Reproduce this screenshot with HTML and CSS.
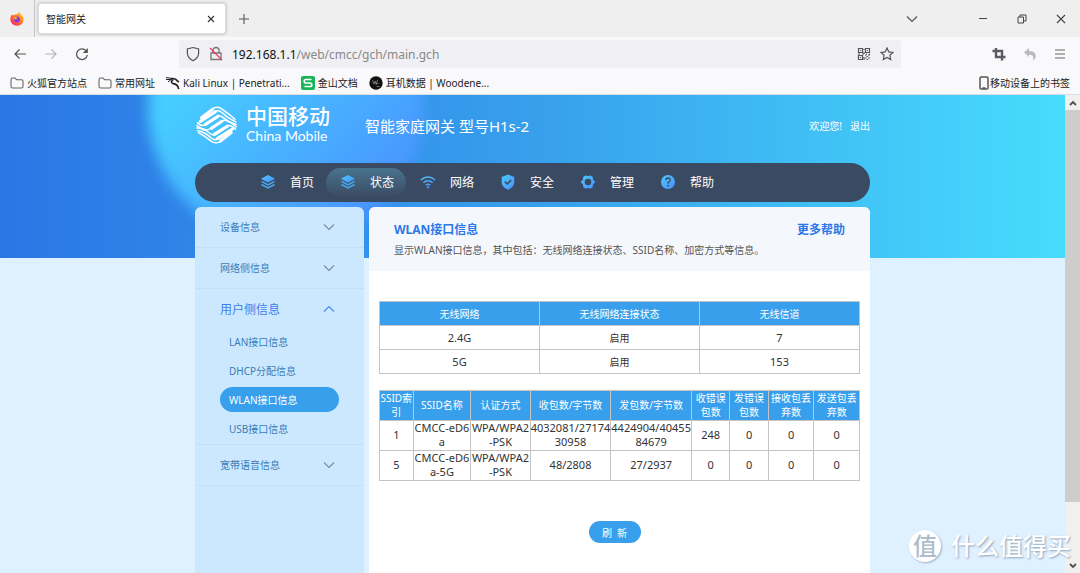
FILE: index.html
```html
<!DOCTYPE html>
<html lang="zh-CN">
<head>
<meta charset="utf-8">
<title>智能网关</title>
<link rel="stylesheet" href="styles.css">
</head>
<body>
<svg class="defs" aria-hidden="true">
  <defs>
    <linearGradient id="blue" x1="0" y1="0" x2="1" y2="1"><stop offset="0" stop-color="#4cc9fb"/><stop offset="1" stop-color="#4790ff"/></linearGradient>
    <linearGradient id="fox" x1="1" y1="0" x2="0" y2="1"><stop offset="0" stop-color="#ffe226"/><stop offset=".45" stop-color="#ff7a2a"/><stop offset="1" stop-color="#f5156c"/></linearGradient>
    <symbol id="layers" viewBox="0 0 16 16">
      <path d="M8 1 15 4.700 8 8.400 1 4.700z" fill="url(#blue)"/>
      <path d="M1.500 7.400 8 10.800l6.500-3.400M1.500 10.500 8 13.900l6.500-3.400" fill="none" stroke="#46a9ee" stroke-width="1.500"/>
    </symbol>
    <symbol id="down" viewBox="0 0 12 8"><path d="M1 1.500l5 5 5-5" fill="none" stroke="currentColor" stroke-width="1.200"/></symbol>
    <symbol id="folder" viewBox="0 0 14 14"><path d="M1 3.500Q1 2 2.500 2H5l1.500 1.700h5Q13 3.700 13 5v5.500Q13 12 11.500 12h-9Q1 12 1 10.500z" fill="none" stroke="#666" stroke-width="1.100"/></symbol>
  </defs>
</svg>

<header class="browser">
  <div class="tabbar">
    <div class="pinned">
      <svg width="16" height="16" viewBox="0 0 16 16"><path d="M10 1q1 1.500 2 2.500 3 2.500 2.500 6A6.600 6.300 0 0 1 1.400 9Q1 6 2.500 3.500l1 1Q5 3.500 6.500 3.500 9 3.500 10 1z" fill="url(#fox)"/><circle cx="8" cy="8.600" r="3" fill="#8a3be0"/><path d="M4 6q3-1 4 .8 1 1.500-2.500 1.700z" fill="#ff9a2b"/></svg>
    </div>
    <div class="tab">
      <span>智能网关</span>
      <button class="icon-btn" aria-label="关闭标签页"><svg width="8" height="8" viewBox="0 0 8 8"><path d="M1 1l6 6M7 1L1 7" stroke="#333" stroke-width="1.100"/></svg></button>
    </div>
    <button class="icon-btn newtab" aria-label="新标签页"><svg width="12" height="12" viewBox="0 0 12 12"><path d="M6 1v10M1 6h10" stroke="#555" stroke-width="1.100"/></svg></button>
    <div class="window-tools">
      <button class="icon-btn tabs-list" aria-label="所有标签页"><svg width="12" height="8"><use href="#down"/></svg></button>
      <button class="icon-btn" aria-label="最小化"><svg width="12" height="12" viewBox="0 0 12 12"><path d="M2 5.500h8" stroke="#444"/></svg></button>
      <button class="icon-btn" aria-label="还原"><svg width="12" height="12" viewBox="0 0 12 12"><path d="M2 4h5.500v6H2zM4 4V2h6v6H7.500" fill="none" stroke="#444"/></svg></button>
      <button class="icon-btn" aria-label="关闭"><svg width="12" height="12" viewBox="0 0 12 12"><path d="M2 2l8 8M10 2l-8 8" stroke="#444" stroke-width="1.100"/></svg></button>
    </div>
  </div>

  <div class="navbar">
    <div class="nav-buttons">
      <button class="icon-btn" aria-label="后退"><svg width="14" height="14" viewBox="0 0 14 14"><path d="M13 7H2M6.500 2.500 2 7l4.500 4.500" fill="none" stroke="#555" stroke-width="1.200"/></svg></button>
      <button class="icon-btn faded" aria-label="前进"><svg width="14" height="14" viewBox="0 0 14 14"><path d="M1 7h11M7.500 2.500 12 7l-4.500 4.500" fill="none" stroke="#555" stroke-width="1.200"/></svg></button>
      <button class="icon-btn" aria-label="刷新页面"><svg width="14" height="14" viewBox="0 0 14 14"><path d="M12.300 8A5.400 5.400 0 1 1 11 3.600" fill="none" stroke="#555" stroke-width="1.300"/><path d="M12.800 1v5H7.800z" fill="#555"/></svg></button>
    </div>
    <div class="urlbar">
      <svg width="14" height="16" viewBox="0 0 14 16"><path d="M7 1.500 12.600 3v4.500Q12.300 12 7 14.700 1.700 12 1.400 7.500V3z" fill="none" stroke="#555" stroke-width="1.200"/></svg>
      <svg width="14" height="16" viewBox="0 0 14 16"><path d="M4 7V4.500a3 3 0 0 1 6 0V7M2 7h10v6.500H2z" fill="none" stroke="#777" stroke-width="1.300"/><path d="M1 2l12 12" stroke="#f0385c" stroke-width="1.300"/></svg>
      <span class="url"><b>192.168.1.1</b>/web/cmcc/gch/main.gch</span>
      <svg width="14" height="14" viewBox="0 0 14 14" fill="none" stroke="#555" stroke-width="1.200"><path d="M1.500 1.500h4v4h-4zM8.500 1.500h4v4h-4zM1.500 8.500h4v4h-4z"/><path d="M3 3.500h1M10 3.500h1M3 10.500h1M8 8h1.500M11 8h2M9.500 9.500H11M8 11h1.500M11 11h2M9.500 12.500H11M7 2v1M7 5v2M1 7h2M5 7h2M9 7h1M12 7h1M7 10v3"/></svg>
      <svg width="14" height="14" viewBox="0 0 14 14"><path d="M7 1l1.800 3.900 4.200.5-3.100 2.900.8 4.200L7 10.400l-3.700 2.100.8-4.200L1 5.400l4.200-.5z" fill="none" stroke="#555" stroke-width="1.200"/></svg>
    </div>
    <div class="nav-tools">
      <button class="icon-btn" aria-label="截图"><svg width="14" height="14" viewBox="0 0 14 14"><path d="M4 1v9h9.500M.5 4H10v9.500" fill="none" stroke="#5b5b66" stroke-width="2.400"/></svg></button>
      <button class="icon-btn" aria-label="撤销"><svg width="14" height="14" viewBox="0 0 14 14"><path d="M1 5.500 6 1v3q7 0 6.800 5.500Q12.500 12 10 13.500 11.500 7.500 6 7.500V10z" fill="#b9b9c0"/></svg></button>
      <button class="icon-btn" aria-label="菜单"><svg width="12" height="12" viewBox="0 0 12 12"><path d="M1 2h10M1 6h10M1 10h10" stroke="#666" stroke-width="1.200"/></svg></button>
    </div>
  </div>

  <nav class="bookmarks">
    <a href="#"><svg width="14" height="14"><use href="#folder"/></svg>火狐官方站点</a>
    <a href="#"><svg width="14" height="14"><use href="#folder"/></svg>常用网址</a>
    <a href="#"><svg width="14" height="14" viewBox="0 0 14 14"><path d="M0 1.500l5 .8M0 3.500l5.500 0M2 6l3-2.400" stroke="#222" fill="none"/><path d="M5 2.600q5-.4 6 2.200l2 1.200M7 3.600q-3 2.600 0 4 5 .4 5.700 5.600" fill="none" stroke="#222" stroke-width="1.600"/></svg><span>Kali Linux | Penetrati...</span></a>
    <a href="#"><svg width="14" height="14" viewBox="0 0 14 14"><rect width="14" height="14" rx="2" fill="#18b657"/><path d="M10.500 3.500H5a1.500 1.500 0 0 0 0 3.500h4a1.500 1.500 0 0 1 0 3.500H3.500" fill="none" stroke="#fff" stroke-width="1.700"/></svg>金山文档</a>
    <a href="#"><svg width="14" height="14" viewBox="0 0 14 14"><circle cx="7" cy="7" r="6.700" fill="#111"/><path d="M3.500 4l1.400 4 1.300-3 1 3.500L8.500 4M7.500 7.500h2M7.500 10.500h3" fill="none" stroke="#999" stroke-width=".7"/></svg><span>耳机数据 | Woodene...</span></a>
    <a href="#" class="mobile"><svg width="10" height="14" viewBox="0 0 10 14"><rect x="1" y="1" width="8" height="12" rx="1.200" fill="none" stroke="#555" stroke-width="1.500"/><path d="M3.500 12h3" stroke="#555" stroke-width="1.500"/></svg>移动设备上的书签</a>
  </nav>
</header>

<div class="viewport">
  <div class="page">
    <div class="hero"><div class="glow"></div></div>
    <div class="container">
      <header class="brand">
        <svg class="logo" width="44" height="42" viewBox="0 0 144 138" fill="none" stroke="#fff" stroke-linecap="round">
          <g stroke-width="5">
            <path d="M54 18Q70 5 86 15 L112 34 131 50"/>
            <path d="M62 26Q76 18 88 28 108 48 134 59"/>
            <path d="M8 62Q22 76 34 68L68 42Q80 34 92 44 112 62 135 67"/>
            <path d="M6 71Q30 92 48 82L92 54Q108 50 135 75"/>
            <path d="M133 83Q116 66 106 72L72 98Q60 106 48 96 28 78 6 79"/>
            <path d="M80 113Q64 122 52 111 32 92 8 87"/>
            <path d="M88 121Q70 133 54 123L28 104 11 94"/>
          </g>
          <g stroke-width="10">
            <path d="M21 45 57 18M17 57 66 26M34 67 76 40M54 80 88 57M106 73 64 99M123 82 74 113M119 94 84 121"/>
          </g>
        </svg>
        <div class="brand-name"><span class="cn">中国移动</span><span class="en">China Mobile</span></div>
        <h1>智能家庭网关 型号H1s-2</h1>
        <div class="user"><span>欢迎您!</span><a href="#">退出</a></div>
      </header>

      <nav class="menu">
        <a href="#"><svg width="16" height="16"><use href="#layers"/></svg>首页</a>
        <a href="#" class="active"><svg width="16" height="16"><use href="#layers"/></svg>状态</a>
        <a href="#"><svg width="16" height="16" viewBox="0 0 16 16"><path d="M.8 6q7.200-6 14.400 0M3.400 8.700q4.600-3.800 9.200 0M5.700 11.200q2.300-1.700 4.600 0" fill="none" stroke="url(#blue)" stroke-width="1.500"/><circle cx="8" cy="13.300" r="1.200" fill="#4790ff"/></svg>网络</a>
        <a href="#"><svg width="16" height="16" viewBox="0 0 16 16"><path d="M8 .5 14.300 3v6Q13.500 13.500 8 15.700 2.500 13.500 1.700 9V3z" fill="url(#blue)"/><path d="M4.800 7.700 7.200 10l4-4" fill="none" stroke="#3b4a63" stroke-width="1.600"/></svg>安全</a>
        <a href="#"><svg width="16" height="16" viewBox="0 0 16 16"><path d="M5 1.700q1.500-.8 2.300.4h1.400q.8-1.200 2.300-.4l1.500 1q.8.800.3 2.200l1 1.500q1.200.4 1.200 1.600t-1.200 1.600l-1 1.500q.5 1.400-.3 2.200l-1.500 1q-1.500.8-2.300-.4H7.300q-.8 1.200-2.300.4l-1.500-1q-.8-.8-.3-2.200l-1-1.500Q1 9.200 1 8t1.200-1.600l1-1.500q-.5-1.400.3-2.200z" fill="url(#blue)"/><circle cx="8" cy="8" r="3.300" fill="#3b4a63"/></svg>管理</a>
        <a href="#"><svg width="16" height="16" viewBox="0 0 16 16"><circle cx="8" cy="8" r="7" fill="url(#blue)"/><path d="M5.800 6.300q0-2.300 2.300-2.300t2.200 2Q10.200 7.200 8.100 8.400v1.300" fill="none" stroke="#3b4a63" stroke-width="1.300"/><circle cx="8.100" cy="11.700" r=".9" fill="#3b4a63"/></svg>帮助</a>
      </nav>

      <div class="columns">
        <aside class="sidebar">
          <section><button class="group">设备信息<svg width="12" height="8"><use href="#down"/></svg></button></section>
          <section><button class="group">网络侧信息<svg width="12" height="8"><use href="#down"/></svg></button></section>
          <section>
            <button class="group open">用户侧信息<svg width="12" height="8"><use href="#down"/></svg></button>
            <ul>
              <li><a href="#">LAN接口信息</a></li>
              <li><a href="#">DHCP分配信息</a></li>
              <li><a href="#" class="current">WLAN接口信息</a></li>
              <li><a href="#">USB接口信息</a></li>
            </ul>
          </section>
          <section><button class="group">宽带语音信息<svg width="12" height="8"><use href="#down"/></svg></button></section>
        </aside>

        <main class="panel">
          <div class="intro">
            <div class="intro-top"><h2>WLAN接口信息</h2><a href="#">更多帮助</a></div>
            <p>显示WLAN接口信息，其中包括：无线网络连接状态、SSID名称、加密方式等信息。</p>
          </div>
          <div class="tables">
            <table class="radio">
              <thead><tr><th>无线网络</th><th>无线网络连接状态</th><th>无线信道</th></tr></thead>
              <tbody>
                <tr><td>2.4G</td><td class="state">启用</td><td>7</td></tr>
                <tr><td>5G</td><td class="state">启用</td><td>153</td></tr>
              </tbody>
            </table>
            <table class="ssid">
              <colgroup><col class="c-index"><col class="c-name"><col class="c-auth"><col class="c-bytes"><col class="c-bytes"><col class="c-err"><col class="c-err"><col class="c-drop"><col class="c-drop"></colgroup>
              <thead><tr><th>SSID索引</th><th>SSID名称</th><th>认证方式</th><th>收包数/字节数</th><th>发包数/字节数</th><th>收错误包数</th><th>发错误包数</th><th>接收包丢弃数</th><th>发送包丢弃数</th></tr></thead>
              <tbody>
                <tr><td>1</td><td>CMCC-eD6a</td><td>WPA/WPA2-PSK</td><td>4032081/2717430958</td><td>4424904/4045584679</td><td>248</td><td>0</td><td>0</td><td>0</td></tr>
                <tr><td>5</td><td>CMCC-eD6a-5G</td><td>WPA/WPA2-PSK</td><td>48/2808</td><td>27/2937</td><td>0</td><td>0</td><td>0</td><td>0</td></tr>
              </tbody>
            </table>
          </div>
          <div class="actions"><button class="refresh">刷&nbsp; 新</button></div>
        </main>
      </div>
    </div>
  </div>
  <div class="scrollbar">
    <button class="icon-btn up" aria-label="向上滚动"><svg width="8" height="6" viewBox="0 0 8 6"><path d="M1 5l3-3 3 3" fill="none" stroke="#505050" stroke-width="1.800"/></svg></button>
    <div class="thumb"></div>
    <button class="icon-btn" aria-label="向下滚动"><svg width="8" height="6" viewBox="0 0 8 6"><path d="M1 1l3 3 3-3" fill="none" stroke="#505050" stroke-width="1.800"/></svg></button>
  </div>
  <div class="watermark"><span class="seal">值</span><span>什么值得买</span></div>
</div>
</body>
</html>
```
FILE: styles.css
```css
* { box-sizing: border-box; }

body {
  margin: 0;
  height: 100vh;
  display: flex;
  flex-direction: column;
  overflow: hidden;
  font-family: "Noto Sans", "Noto Sans CJK SC", sans-serif;
  font-size: 10px;
  color: #333;
}

a { color: inherit; text-decoration: none; }
button { font: inherit; color: inherit; border: 0; background: none; padding: 0; }
svg { display: block; flex: none; }
.defs { position: absolute; width: 0; height: 0; }

.icon-btn { display: flex; align-items: center; justify-content: center; color: #555; }
.faded { opacity: .4; }

/* Browser chrome */
.browser { flex: none; background: #f9f9fb; border-bottom: 1px solid #d9dde4; color: #222; }
.tabbar { display: flex; align-items: stretch; height: 37px; background: #efefef; }
.pinned { width: 35px; display: flex; align-items: center; justify-content: center; border-right: 1px solid #c4c4c4; }
.tab {
  width: 188px;
  margin: 3px 0 3px 3px;
  padding: 0 10px 0 7px;
  display: flex;
  align-items: center;
  justify-content: space-between;
  background: #fff;
  border: 1px solid #ddd;
  border-radius: 3px;
  box-shadow: 0 0 3px rgba(0, 0, 0, .3);
}
.newtab { width: 36px; }
.window-tools { margin-left: auto; display: flex; gap: 27px; padding-right: 13px; }
.tabs-list { margin-right: 32px; }

.navbar { display: flex; align-items: center; height: 34px; }
.nav-buttons { display: flex; gap: 17px; padding-left: 13px; width: 179px; }
.urlbar {
  flex: 1;
  height: 28px;
  display: flex;
  align-items: center;
  gap: 9px;
  padding: 0 7px;
  background: #f0f0f4;
  border-radius: 3px;
}
.url { flex: 1; font-size: 12px; color: #888; }
.url b { font-weight: 400; color: #111; }
.nav-tools { width: 179px; display: flex; justify-content: flex-end; gap: 17px; padding-right: 14px; }

.bookmarks { display: flex; align-items: center; gap: 11px; height: 23px; padding: 0 10px; }
.bookmarks a { display: flex; align-items: center; gap: 3px; white-space: nowrap; }
.bookmarks .mobile { margin-left: auto; gap: 1px; }

/* Gateway page */
.viewport { flex: 1; min-height: 0; display: flex; position: relative; }
.page { flex: 1; position: relative; background: #dff0ff; overflow: hidden; display: flex; justify-content: center; }
.hero {
  position: absolute;
  top: 0;
  left: 0;
  width: 100%;
  height: 163px;
  overflow: hidden;
  background: linear-gradient(90deg, #2b76e5, #379fec 50%, #47dcfd);
}
.glow {
  position: absolute;
  top: -126px;
  left: calc(50% - 385px);
  width: 276px;
  height: 276px;
  border-radius: 50%;
  background: linear-gradient(135deg, #46ccff 30%, #4994ff 85%);
  filter: blur(7px);
}
.container { position: relative; width: 100%; max-width: 675px; display: flex; flex-direction: column; }

.brand { display: flex; align-items: center; height: 68px; padding-bottom: 8px; color: #fff; }
.brand-name { display: flex; flex-direction: column; margin-left: 7px; width: 119px; }
.cn { font-size: 21px; line-height: 22px; font-weight: 500; }
.en { font-family: Lato, sans-serif; font-size: 14px; line-height: 18px; }
.brand h1 { margin: 0; font-size: 15px; font-weight: 400; }
.user { margin-left: auto; display: flex; gap: 8px; }

.menu {
  height: 39px;
  flex: none;
  display: flex;
  align-items: center;
  padding-left: 51px;
  border-radius: 20px;
  background: #3b4a63;
  color: #fff;
  font-size: 12px;
}
.menu a { width: 80px; height: 29px; display: flex; align-items: center; gap: 14px; padding: 0 0 1px 14px; border-radius: 15px; }
.menu .active { background: linear-gradient(#48748e, #3b4a63); }

.columns { flex: 1; margin-top: 5px; display: flex; gap: 5px; }
.sidebar { width: 169px; flex: none; background: #cce8ff; border-radius: 6px 6px 0 0; color: #3a7db8; }
.sidebar section { border-bottom: 1px solid #c0e0f4; }
.group { width: 100%; height: 40px; display: flex; align-items: center; justify-content: space-between; padding: 0 29px 1px 25px; }
.group svg { color: #7a8ea6; }
.group.open { font-size: 12px; color: #3f80e8; }
.group.open svg { transform: rotate(180deg); color: #4a8af0; }
.sidebar ul { list-style: none; margin: 0; padding: 0 25px 3px; display: grid; gap: 4px; }
.sidebar li a { height: 25px; display: flex; align-items: center; padding: 0 0 1px 9px; border-radius: 13px; }
.sidebar .current { background: #379fec; color: #fff; }

.panel { flex: 1; min-width: 0; background: #fff; border-radius: 6px 6px 0 0; overflow: hidden; display: flex; flex-direction: column; }
.intro { height: 64px; padding: 14px 25px 0; background: #f4f8fd; }
.intro-top { display: flex; justify-content: space-between; font-size: 12px; line-height: 18px; font-weight: 700; color: #2c78e8; }
.intro h2 { margin: 0; font-size: 12px; }
.intro p { margin: 3px 0 0; line-height: 16px; color: #555; }

.tables { padding: 30px 10px 0; display: grid; gap: 16px; }
table { width: 100%; border-collapse: collapse; table-layout: fixed; text-align: center; }
th, td { border: 1px solid #c4c4c4; padding: 0 0 1px; word-break: break-all; }
th { background: #379fec; color: #fff; font-size: 10px; font-weight: 400; }
td { font-size: 11px; }
.state { font-size: 10px; }
.radio tr { height: 24px; }
.ssid th, .ssid td { height: 30px; line-height: 14px; }
.c-index { width: 7%; }
.c-name { width: 12%; }
.c-auth { width: 12.400%; }
.c-bytes { width: 16.800%; }
.c-err { width: 8%; }
.c-drop { width: 9.500%; }

.actions { padding: 40px 10px 0 0; display: flex; justify-content: center; }
.refresh { width: 52px; height: 22px; border-radius: 11px; background: #379fec; color: #fff; }

.scrollbar { width: 15px; flex: none; display: flex; flex-direction: column; background: #f0f0f0; }
.scrollbar button { height: 15px; flex: none; }
.scrollbar .thumb { height: 82%; background: #cdcdcd; margin-bottom: auto; }

.watermark {
  position: absolute;
  right: 9px;
  bottom: 11px;
  display: flex;
  align-items: center;
  gap: 10px;
  color: #fff;
  font-size: 24px;
  line-height: 32px;
  font-weight: 500;
  text-shadow: 1px 1px 2px #8ea3b8;
}
.seal {
  width: 32px;
  height: 32px;
  border-radius: 50%;
  background: #fff;
  color: #aebccb;
  text-align: center;
  box-shadow: 1px 1px 2px #9fb2c5;
  text-shadow: none;
}
```
